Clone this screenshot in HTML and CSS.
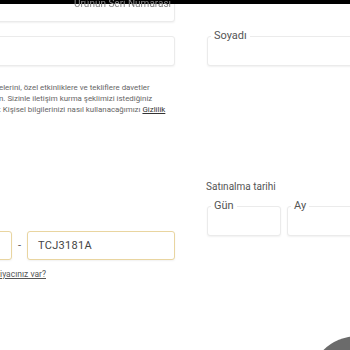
FILE: index.html
```html
<!DOCTYPE html>
<html lang="tr">
<head>
    <meta charset="UTF-8">
    <meta name="viewport" content="width=device-width, initial-scale=1.0">
    <title>Ürün Kaydı</title>
    <link rel="stylesheet" href="styles.css">
</head>
<body>
    <header class="topbar">
        <span class="topbar-label">Ürünün Seri Numarası</span>
    </header>

    <main class="form-grid">
        <!-- left column -->
        <section class="col col-left">
            <div class="field field-first"></div>
            <div class="field field-name"></div>

            <p class="consent">
                elerini, özel etkinliklere ve tekliflere davetler<br>
                n. Sizinle iletişim kurma şeklimizi istediğiniz<br>
                : Kişisel bilgilerinizi nasıl kullanacağımızı <a href="#">Gizlilik</a>
            </p>

            <div class="serial-row">
                <div class="field field-gold field-prefix"></div>
                <span class="dash">-</span>
                <div class="field field-gold field-serial">TCJ3181A</div>
            </div>
            <div class="help-row">
                <a class="help-link" href="#">Yardıma mı ihtiyacınız var?</a>
            </div>
        </section>

        <!-- right column -->
        <section class="col col-right">
            <div class="field field-surname">
                <span class="field-label">Soyadı</span>
            </div>

            <div class="date-title">Satınalma tarihi</div>
            <div class="date-row">
                <div class="field field-day"><span class="field-label">Gün</span></div>
                <div class="field field-month"><span class="field-label">Ay</span></div>
            </div>
        </section>
    </main>

    <div class="chat-bubble"></div>
</body>
</html>
```

FILE: styles.css
```css
body {
    margin: 0;
    background: #fff;
    font-family: Roboto, "Liberation Sans", Arial, sans-serif;
    color: #444;
    overflow: hidden;
    height: 350px;
}
.topbar {
    position: fixed;
    top: 0;
    left: 0;
    right: 0;
    height: 4px;
    background: #000;
    z-index: 2;
}
.topbar-label {
    display: block;
    margin: -2px 0 0 74px;
    font-size: 10px;
    line-height: 12px;
    color: #888;
}
.form-grid {
    display: grid;
    grid-template-columns: 360px 360px;
    column-gap: 32px;
    margin-left: -185px;
}
.col {
    display: flex;
    flex-direction: column;
}
.field {
    box-sizing: border-box;
    height: 30px;
    border: 1px solid #ebebeb;
    border-radius: 3px;
    box-shadow: 0 1px 2px rgba(0, 0, 0, 0.06);
    background: #fff;
}
.field-label {
    display: inline-block;
    margin: -7px 0 0 3px;
    padding: 0 3px;
    background: #fff;
    font-size: 11px;
    line-height: 12px;
    color: #555;
    vertical-align: top;
}
.field-first {
    margin-top: -8px;
}
.field-name {
    margin-top: 14px;
}
.consent {
    margin: 16px 0 0 184px;
    font-size: 7.9px;
    line-height: 11px;
    color: #666;
    white-space: nowrap;
}
.consent a {
    color: #333;
    text-decoration: underline;
}
.serial-row {
    display: flex;
    align-items: center;
    margin-top: 116px;
}
.field-gold {
    border-color: #e9d5a0;
    height: 29px;
}
.field-prefix {
    width: 197px;
}
.dash {
    width: 15px;
    text-align: center;
    font-size: 11px;
    color: #555;
}
.field-serial {
    width: 148px;
    padding-left: 10px;
    font-size: 11px;
    line-height: 27px;
    color: #444;
    letter-spacing: 0.3px;
}
.help-row {
    width: 231px;
    margin-top: 2px;
    text-align: right;
    white-space: nowrap;
}
.help-link {
    font-size: 8.5px;
    color: #555;
}
.field-surname {
    margin-top: 36px;
}
.date-title {
    margin-top: 115px;
    font-size: 10px;
    line-height: 12px;
    color: #555;
    margin-left: -1px;
}
.date-row {
    display: flex;
    gap: 6px;
    margin-top: 13px;
}
.field-day {
    width: 74px;
}
.field-month {
    flex: 1;
}
.chat-bubble {
    position: fixed;
    right: -58px;
    bottom: -86px;
    width: 100px;
    height: 100px;
    border-radius: 50%;
    background: #6b6b6b;
}
```
